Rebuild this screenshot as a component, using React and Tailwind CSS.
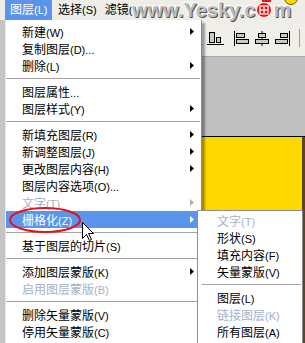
import React from "react";

const main = [
  { t: "新建", k: "(W)", arrow: true },
  { t: "复制图层", k: "(D)..." },
  { t: "删除", k: "(L)", arrow: true },
  "sep",
  { t: "图层属性", k: "..." },
  { t: "图层样式", k: "(Y)", arrow: true },
  "sep",
  { t: "新填充图层", k: "(R)", arrow: true },
  { t: "新调整图层", k: "(J)", arrow: true },
  { t: "更改图层内容", k: "(H)", arrow: true },
  { t: "图层内容选项", k: "(O)..." },
  { t: "文字", k: "(T)", arrow: true, disabled: true },
  { t: "栅格化", k: "(Z)", arrow: true, active: true },
  "sep",
  { t: "基于图层的切片", k: "(S)" },
  "sep",
  { t: "添加图层蒙版", k: "(K)", arrow: true },
  { t: "启用图层蒙版", k: "(B)", disabled: true },
  "sep",
  { t: "删除矢量蒙版", k: "(V)" },
  { t: "停用矢量蒙版", k: "(C)" },
];

const sub = [
  { t: "文字", k: "(T)", disabled: true },
  { t: "形状", k: "(S)" },
  { t: "填充内容", k: "(F)" },
  { t: "矢量蒙版", k: "(V)" },
  "sep",
  { t: "图层", k: "(L)" },
  { t: "链接图层", k: "(K)", disabled: true },
  { t: "所有图层", k: "(A)" },
];

function Arrow({ color }) {
  return (
    <svg width="4" height="7" viewBox="0 0 4 7" className="shrink-0">
      <polygon points="0,0 4,3.5 0,7" fill={color} />
    </svg>
  );
}

function Item({ it, padLeft }) {
  const color = it.active ? "text-white" : it.disabled ? "text-[#a5b1c7]" : "text-black";
  return (
    <div
      className={`h-[17px] flex items-center justify-between pr-[5px] ${padLeft} ${
        it.active ? "bg-[#5a94ec]" : ""
      } ${color}`}
    >
      <span className="whitespace-nowrap leading-none">
        <span className="text-[12px]">{it.t}</span>
        <span className="text-[11px]">{it.k}</span>
      </span>
      {it.arrow && <Arrow color={it.active ? "#ffffff" : it.disabled ? "#a5b1c7" : "#000000"} />}
    </div>
  );
}

function Sep({ cls }) {
  return (
    <div className={`h-[9px] flex items-center ${cls}`}>
      <div className="h-px w-full bg-[#a3a3a3]" />
    </div>
  );
}

function AlignIcon({ kind }) {
  const bar = "#c9c9c9";
  if (kind === "bottom") {
    return (
      <svg width="17" height="14" viewBox="0 0 17 14">
        <rect x="2.5" y="1.5" width="5" height="10" fill={bar} stroke="#000" />
        <rect x="9.5" y="6.5" width="4" height="5" fill={bar} stroke="#000" />
        <line x1="0" y1="13.5" x2="17" y2="13.5" stroke="#000" />
      </svg>
    );
  }
  if (kind === "left") {
    return (
      <svg width="16" height="15" viewBox="0 0 16 15">
        <line x1="0.5" y1="0" x2="0.5" y2="15" stroke="#000" />
        <rect x="2.5" y="2.5" width="8" height="4" fill={bar} stroke="#000" />
        <rect x="2.5" y="8.5" width="12" height="4" fill={bar} stroke="#000" />
      </svg>
    );
  }
  if (kind === "center") {
    return (
      <svg width="14" height="15" viewBox="0 0 14 15">
        <line x1="7" y1="0" x2="7" y2="15" stroke="#000" />
        <rect x="3.5" y="2.5" width="7" height="4" fill={bar} stroke="#000" />
        <rect x="0.5" y="8.5" width="13" height="4" fill={bar} stroke="#000" />
      </svg>
    );
  }
  return (
    <svg width="15" height="15" viewBox="0 0 15 15">
      <line x1="14.5" y1="0" x2="14.5" y2="15" stroke="#000" />
      <rect x="5.5" y="2.5" width="7" height="4" fill={bar} stroke="#000" />
      <rect x="0.5" y="8.5" width="12" height="4" fill={bar} stroke="#000" />
    </svg>
  );
}

export default function App() {
  return (
    <div className="relative w-[305px] h-[343px] overflow-hidden bg-[#c0c0c0] font-['Liberation_Sans','Noto_Sans_CJK_SC',sans-serif] select-none">
      {/* menu bar */}
      <div className="h-[20px] flex items-stretch bg-[#eeede8] text-black">
        <div className="ml-[5px] w-[47px] pl-[5px] flex items-center bg-[#5a94ec] text-white whitespace-nowrap leading-none">
          <span className="text-[12px]">图层</span>
          <span className="text-[11px]">(L)</span>
        </div>
        <div className="ml-[6px] flex items-center whitespace-nowrap leading-none">
          <span className="text-[12px]">选择</span>
          <span className="text-[11px]">(S)</span>
        </div>
        <div className="ml-[8px] flex items-center whitespace-nowrap leading-none">
          <span className="text-[12px]">滤镜</span>
          <span className="text-[11px]">(</span>
        </div>
      </div>

      {/* body */}
      <div className="flex h-[323px]">
        <div className="w-[6px] bg-[#c4c4c4] border-r border-[#e8e8e8]" />
        <div className="relative z-10 w-[196px] bg-white border-r border-[#8a8a8a] pt-[3px] shadow-[3px_3px_2px_rgba(0,0,0,0.35)]">
          {main.map((it, i) =>
            it === "sep" ? (
              <Sep key={i} cls="mr-[1px]" />
            ) : (
              <div key={i} className="mr-[2px]">
                <Item it={it} padLeft="pl-[16px]" />
              </div>
            )
          )}
        </div>
        <div className="flex-1 flex flex-col">
          <div className="h-[37px] bg-[#efeee9] border-b border-[#a8a8a8] flex items-center">
            <div className="ml-[5px]"><AlignIcon kind="bottom" /></div>
            <div className="ml-[10px]"><AlignIcon kind="left" /></div>
            <div className="ml-[5px]"><AlignIcon kind="center" /></div>
            <div className="ml-[6px]"><AlignIcon kind="right" /></div>
            <div className="ml-[9px] h-[18px] w-px bg-[#9a9a9a]" />
          </div>
          <div className="h-[80px] bg-[#c0c0c0] border-b border-black" />
          <div className="flex-1 flex">
            <div className="flex-1 bg-[#ffd800]" />
            <div className="w-[3px] bg-[#5e4426]" />
          </div>
        </div>
      </div>

      {/* submenu */}
      <div className="absolute z-20 left-[197px] top-[210px] w-[106px] h-[140px] bg-white border border-[#8f8f8f] pt-[1px]">
        {sub.map((it, i) =>
          it === "sep" ? (
            <Sep key={i} cls="ml-[4px] mr-[1px]" />
          ) : (
            <Item key={i} it={it} padLeft="pl-[19px]" />
          )
        )}
      </div>

      {/* red ellipse annotation */}
      <svg className="absolute z-30 left-0 top-0 pointer-events-none" width="305" height="343">
        <ellipse cx="45" cy="220" rx="35" ry="12" fill="none" stroke="#e8101c" strokeWidth="2" />
      </svg>

      {/* cursor */}
      <svg className="absolute z-30 left-[82px] top-[222px]" width="13" height="20" viewBox="0 0 13 20">
        <polygon
          points="0.5,0.5 0.5,16.5 4.5,12.5 7.5,18.5 9.5,17.5 6.5,11.5 11.5,11.5"
          fill="#ffffff"
          stroke="#000000"
          strokeWidth="1"
          strokeLinejoin="miter"
        />
      </svg>

      {/* watermark */}
      <div className="absolute z-30 left-[132px] top-0 flex items-center h-[20px] text-[20px] font-bold text-[#bdbdbd] [text-shadow:1px_1px_0_#505050,-1px_-1px_0_#ffffff] whitespace-nowrap leading-none">
        <span>www.Yesky.c</span>
        <svg width="16" height="16" viewBox="0 0 16 16" className="mx-[1px]">
          <circle cx="8" cy="8" r="7.5" fill="#e01818" stroke="#fff" strokeWidth="1" />
          <rect x="4" y="4" width="8" height="8" fill="none" stroke="#fff" strokeWidth="1.2" />
          <line x1="4" y1="8" x2="12" y2="8" stroke="#fff" strokeWidth="1.2" />
          <line x1="8" y1="4" x2="8" y2="12" stroke="#fff" strokeWidth="1.2" />
        </svg>
        <span>m</span>
      </div>
      <svg className="absolute z-30 left-[283px] top-[-7px]" width="16" height="13" viewBox="0 0 16 13">
        <circle cx="8" cy="5" r="6.5" fill="#ffd800" stroke="#6a5a00" strokeWidth="1" />
      </svg>
      <svg className="absolute z-30 left-[262px] top-[-3px]" width="10" height="6" viewBox="0 0 10 6">
        <rect x="0" y="0" width="9" height="5" fill="#e01818" />
      </svg>
    </div>
  );
}
